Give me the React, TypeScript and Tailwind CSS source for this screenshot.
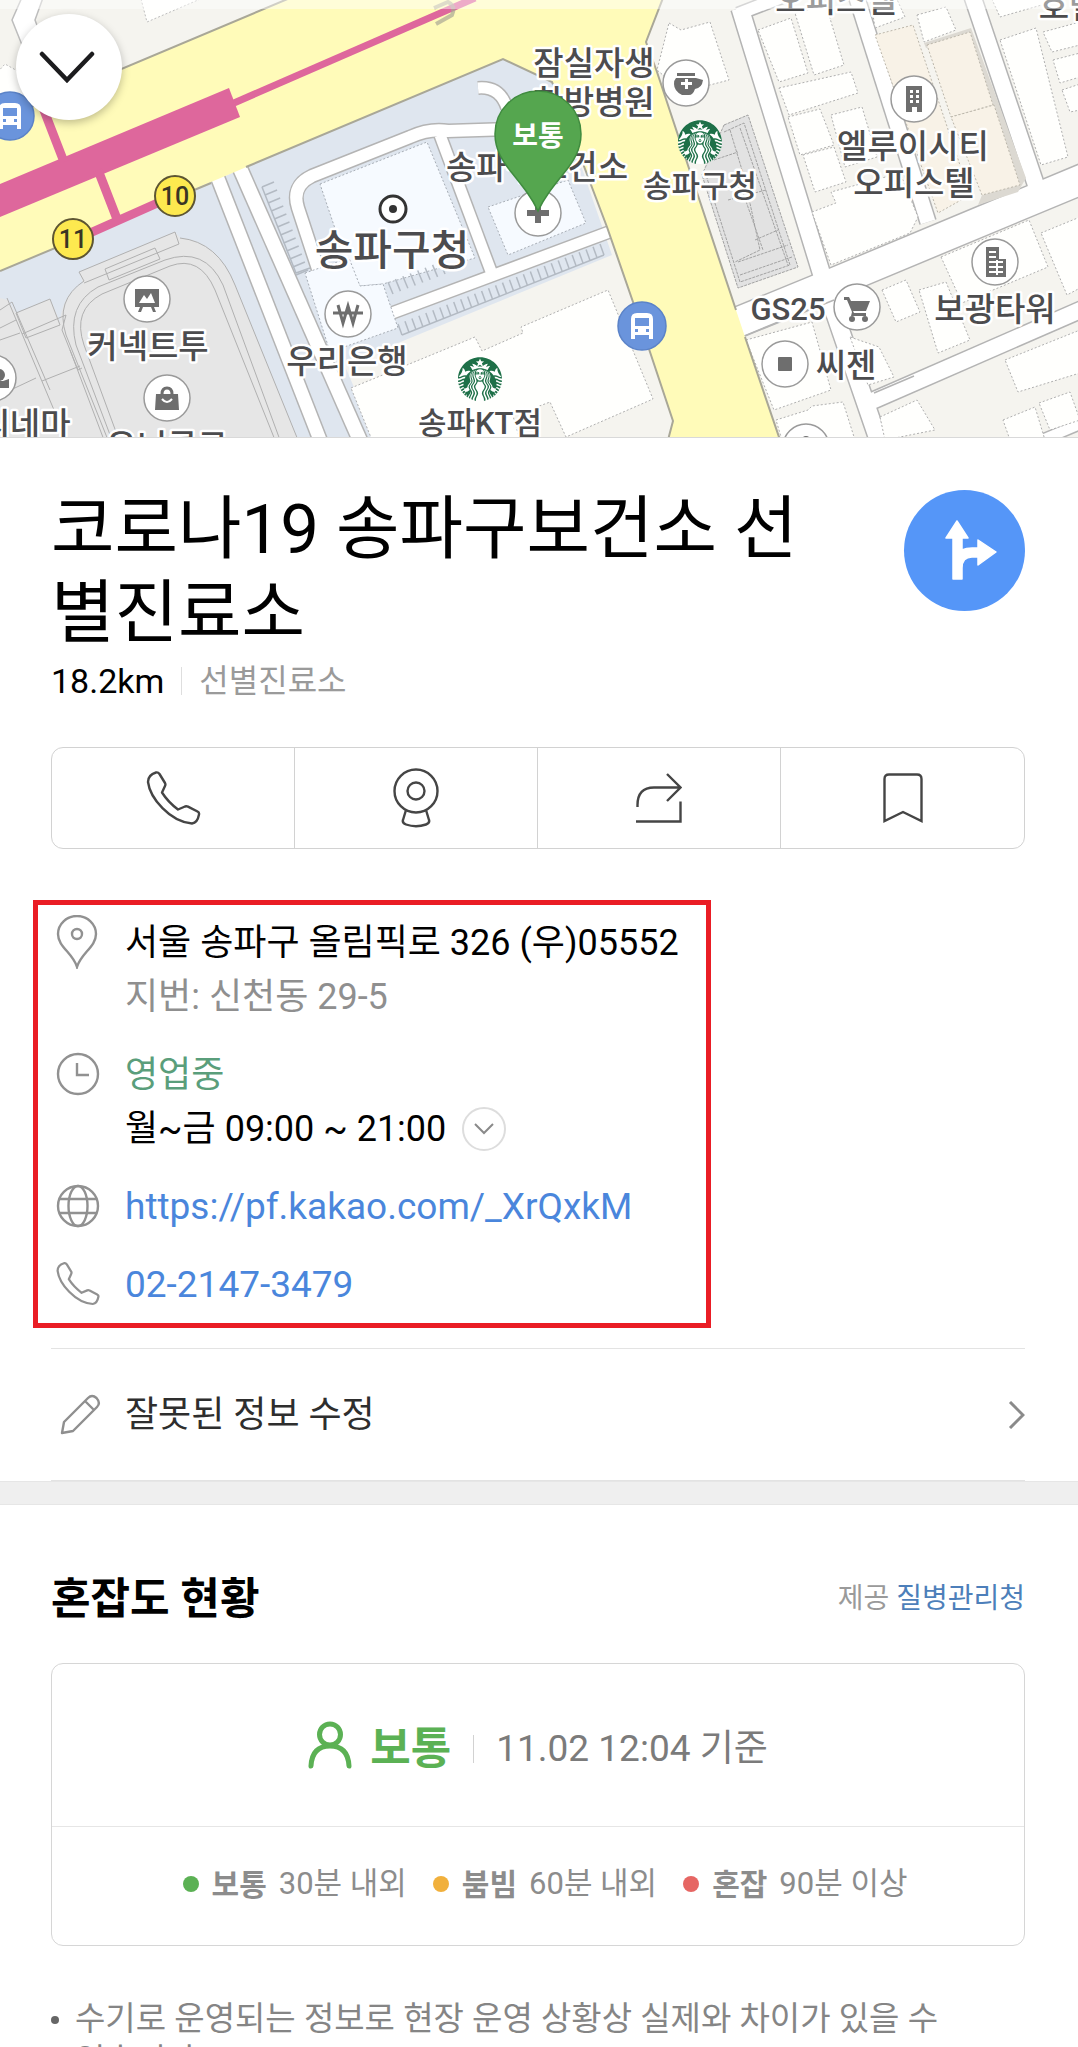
import { FC, ReactNode } from 'react';
import { SiStarbucks } from 'react-icons/si';

const FONT = "font-[Roboto,'Noto_Sans_CJK_KR',sans-serif]";

type Point = { x: number, y: number };

const whiteBuildings = [
  '758,30 791,18 808,73 779,82',
  '795,13 826,5 844,65 814,75',
  '779,88 851,72 858,93 789,115',
  '788,117 820,109 834,145 800,155',
  '831,115 862,107 877,157 845,167',
  '803,155 834,147 846,182 815,192',
  '812,212 836,203 831,192 900,173 918,217 910,233 831,265',
  '669,23 681,30 710,22 729,80 683,92 657,70',
  '917,15 946,7 956,30 924,42',
  '875,28 905,17 895,-5 870,-5',
  '1000,40 1036,28 1068,157 1041,165',
  '990,-5 1000,17 1045,4 1042,-5',
  '1043,32 1080,22 1080,45 1052,52',
  '1053,60 1080,53 1080,77 1060,83',
  '1062,90 1080,84 1080,110 1070,112',
  '941,257 1029,220 1048,267 962,303',
  '1041,233 1080,217 1080,288 1067,295',
  '882,290 906,280 920,312 896,322',
  '919,290 946,282 970,340 938,353',
  '1005,360 1080,330 1080,373 1018,392',
  '880,417 917,400 935,430 885,440',
  '1003,420 1035,407 1045,440 1010,440',
  '1039,403 1070,392 1080,420 1050,430',
  '746,340 812,322 831,390 774,410',
  '776,420 808,410 812,406 843,402 855,440 782,440',
  '850,337 879,347 894,377 868,385',
  '351,388 475,337 482,351 523,333 521,327 608,290 653,399 566,437 550,402 513,416 520,440 372,440',
];

const tanBuildings = [
  '875,35 913,25 970,195 938,213',
  '927,45 970,32 993,105 951,117',
  '951,117 994,105 1020,185 982,195',
];

const blueBuildings = [
  '320,184 427,142 475,258 383,284 360,286 349,270',
  '305,273 349,258 360,286 383,284 398,328 330,352',
  '488,207 568,180 586,223 508,255',
];

const roads = [
  { d: 'M740 8 L825 285 L880 445', w: 17 },
  { d: 'M738 14 L800 -10', w: 12 },
  { d: 'M856 -5 L928 222', w: 15 },
  { d: 'M972 -5 L1036 185', w: 16 },
  { d: 'M738 322 L826 286 L1085 178', w: 29 },
  { d: 'M872 401 L1085 308', w: 16 },
  { d: 'M1030 445 L1085 422', w: 10 },
];

const blueRoads = [
  { d: 'M217 176 L322 445', w: 13 },
  { d: 'M239 166 L362 445', w: 14 },
  { d: 'M319 272 L298 208 Q291 186 312 176 L410 137 Q430 128 448 131 L510 129', w: 12 },
  { d: 'M440 135 L492 274', w: 11 },
  { d: 'M392 313 L612 231', w: 11 },
  { d: 'M478 88 Q500 86 507 108', w: 11 },
];

const Roads: FC<{ items: { d: string, w: number }[] }> = ({ items }) => (
  <g fill="none">
    {items.map((r) => <path key={r.d} d={r.d} stroke="#b4b4b4" strokeWidth={r.w + 3} />)}
    {items.map((r) => <path key={r.d} d={r.d} stroke="#ffffff" strokeWidth={r.w} />)}
  </g>
);

const Stalls: FC<{ from: Point, to: Point, count: number, dx: number, dy: number }> = ({ from, to, count, dx, dy }) => (
  <g stroke="#b3bac3" strokeWidth="1.5">
    {Array.from({ length: count }, (_, i) => {
      const x = from.x + ((to.x - from.x) * i) / (count - 1);
      const y = from.y + ((to.y - from.y) * i) / (count - 1);
      return <line key={i} x1={x} y1={y} x2={x + dx} y2={y + dy} />;
    })}
  </g>
);

const Label: FC<Point & { size?: number, children: string }> = ({ x, y, size = 33, children }) => (
  <text x={x} y={y} fontSize={size} textAnchor="middle" fontWeight="500" fill="#4c4c4e" stroke="#ffffff" strokeWidth="5" strokeLinejoin="round" paintOrder="stroke">
    {children}
  </text>
);

const Poi: FC<Point & { children?: ReactNode }> = ({ x, y, children }) => (
  <g transform={`translate(${x} ${y})`}>
    <circle r="23" fill="#ffffff" stroke="#9a9a9a" strokeWidth="1.5" />
    <g fill="#6e6e6e">{children}</g>
  </g>
);

const BusStop: FC<Point> = ({ x, y }) => (
  <g transform={`translate(${x} ${y})`}>
    <circle r="24" fill="#6a94dc" stroke="#5b83c8" strokeWidth="1.5" />
    <path d="M-11 -7 Q-11 -13 -5 -13 H5 Q11 -13 11 -7 V13 H7 V9 H-7 V13 H-11 Z" fill="#ffffff" />
    <path d="M-7 -8 H7 V0 H-7 Z M-7 3 h3 v3 h-3 Z M4 3 h3 v3 h-3 Z" fill="#6a94dc" />
  </g>
);

const Starbucks: FC<Point> = ({ x, y }) => (
  <g>
    <circle cx={x} cy={y} r="22" fill="#ffffff" />
    <SiStarbucks x={x - 22} y={y - 22} size={44} color="#1e7048" />
  </g>
);

const Exit: FC<Point & { children: string }> = ({ x, y, children }) => (
  <g>
    <circle cx={x} cy={y} r="20" fill="#fde94f" stroke="#5d5532" strokeWidth="2" />
    <text x={x} y={y + 9} fontSize="25" fontWeight="500" textAnchor="middle" fill="#3a3524">{children}</text>
  </g>
);

const MapView = () => (
  <svg viewBox="0 0 1078 437" preserveAspectRatio="xMidYMid slice" className="block w-full h-[437px]" role="img" aria-label="지도">
    <rect width="1078" height="437" fill="#f5f4ef" />

    {/* ground */}
    <path d="M0 271 L503 59 L552 82 L612 255 L398 343 L345 366 L375 437 L0 437 Z" fill="#dfe6ef" />
    <path d="M23 -5 L12 20 L24 50 L50 60 L35 20 L44 -5 Z" fill="#ffffff" stroke="#bdbdbd" strokeWidth="1.5" />
    <path d="M-5 75 L5 64 L30 78 L30 110 L-5 120 Z" fill="#fffffd" stroke="#bdbdbd" strokeDasharray="2 2" />
    <path d="M140 -5 L147 22 L205 -3 Z" fill="#fffffd" stroke="#bdbdbd" strokeDasharray="2 2" />

    {/* mall */}
    <path d="M0 298 L8 300 L16 313 L50 299 L60 322 Q62 295 83 283 L79 272 L175 232 L180 238 Q218 242 235 285 L298 440 L0 440 Z" fill="#e6e6e6" />
    <g fill="none" stroke="#b0b0b0" strokeWidth="1">
      <path d="M108 440 L66 335 Q55 300 84 281 L79 272 L175 232 L179 244 L84 283" />
      <path d="M112 440 L76 345 Q66 305 98 287 L165 260 Q205 246 223 285 L280 440" />
      <path d="M119 440 L84 345 Q72 310 102 294 L170 266 Q200 255 215 290 L275 440" />
      <path d="M180 238 Q218 242 235 285 L298 440" />
      <path d="M105 269 L155 248 L160 259 L109 280 Z" />
      <path d="M7 298 L54 410 M12 302 L50 390 M16 313 L50 299 L60 325 L26 338 Z M0 310 L12 302 M0 328 L16 320 M0 340 L20 333 M22 334 L66 315 L62 330 L78 370 L82 368 M42 381 L80 366 M0 395 L36 378 M70 350 L104 440" />
    </g>

    <Roads items={blueRoads} />
    {blueBuildings.map((p) => <polygon key={p} points={p} fill="#f6faff" stroke="#a8aeb6" strokeDasharray="2 2" />)}
    <Stalls from={{ x: 262, y: 187 }} to={{ x: 296, y: 275 }} count={12} dx={12} dy={-5} />
    <path d="M262 187 L296 273 L310 268" fill="none" stroke="#b3bac3" strokeWidth="1.5" />
    <Stalls from={{ x: 398, y: 324 }} to={{ x: 600, y: 244 }} count={30} dx={4} dy={11} />
    <path d="M402 335 L604 255" fill="none" stroke="#b3bac3" strokeWidth="1.5" />
    <Stalls from={{ x: 388, y: 282 }} to={{ x: 440, y: 262 }} count={8} dx={5} dy={12} />

    {/* city blocks */}
    <Roads items={roads} />
    <path d="M874 393 L914 376 M745 336 L834 300" stroke="#b4b4b4" strokeWidth="1.5" />
    {whiteBuildings.map((p) => <polygon key={p} points={p} fill="#fffffd" stroke="#b0b0b0" strokeDasharray="2 2" />)}
    <path d="M924 43 L971 28 L1026 178 L1018 192 L978 205 L982 195 L1017 184 L968 35 L926 48 Z" fill="#dcd9d2" />
    {tanBuildings.map((p) => <polygon key={p} points={p} fill="#f8f2e7" stroke="#bcb7ab" strokeDasharray="2 2" />)}
    <g stroke="#a2a2a2" fill="none" strokeDasharray="3 1">
      <polygon points="724,125 748,115 798,267 738,288 702,175" fill="#e2e2e2" />
      <path d="M724 132 L744 123 L790 265 L740 282 L706 175 M730 130 L745 180 L760 250 L735 262 M740 128 L788 265 M714 160 L738 152 M728 200 L766 190 M733 190 L741 187 L763 250 M755 240 L778 230 M738 262 L788 245 M740 275 L792 257" />
    </g>

    {/* main roads */}
    <path d="M0 120 L290 -2 L663 -2 L646 42 L657 72 L736 310 L745 337 L780 440 L668 440 L673 421 L641 325 L607 227 L552 82 L503 59 L0 271 Z" fill="#fffbb9" />
    <path d="M0 120 L290 -2 M663 -2 L646 42 L657 72 L736 310 M745 337 L780 440 M668 440 L673 421 L641 325 L607 227 L552 82 L503 59 L246 167 M211 183 L0 271" fill="none" stroke="#a9a797" strokeWidth="2" />

    {/* subway */}
    <polygon points="0,184 229,88 240,117 0,217" fill="#de679c" />
    <g stroke="#de679c" fill="none">
      <path d="M234 103 L475 -2" strokeWidth="7" />
      <path d="M98 170 L117 219 M90 233 L162 201 M64 162 L40 100" strokeWidth="9" />
    </g>
    <path d="M434 8 l14 -6 q8 4 4 13 l-16 9" fill="none" stroke="#aaa694" strokeWidth="4" opacity="0.7" />
    <Exit x={175} y={196}>10</Exit>
    <Exit x={73} y={239}>11</Exit>

    <BusStop x={642} y={326} />
    <BusStop x={10} y={116} />

    <Poi x={686} y={83}>
      <path d="M-9 -10 H9 V-7 H-9 Z M-10 -5 H10 L17 -3 Q16 5 9 6 Q7 12 3 12 H-4 Q-12 8 -12 1 Q-12 -3 -10 -5 Z" />
      <path d="M-1 -4 h3 v3 h4 v3 h-4 v4 h-3 v-4 h-4 v-3 h4 Z" fill="#ffffff" />
    </Poi>
    <Poi x={914} y={99}>
      <path d="M-8 -13 H8 V13 H3 V8 H-2 V13 H-8 Z" />
      <path d="M-4 -9 h3 v3 h-3 Z M2 -9 h3 v3 h-3 Z M-4 -4 h3 v3 h-3 Z M2 -4 h3 v3 h-3 Z M-4 1 h3 v3 h-3 Z M2 1 h3 v3 h-3 Z" fill="#ffffff" />
    </Poi>
    <Poi x={995} y={262}>
      <path d="M-9 -15 H4 V-3 H11 V15 H-9 Z" />
      <path d="M-6 -10 H1 M-6 -5 H1 M-6 0 H8 M-6 5 H8 M-6 10 H8 M2 -2 V13" stroke="#ffffff" strokeWidth="2" />
    </Poi>
    <Poi x={857} y={307}>
      <path d="M-13 -10 H-8 L-6 -6 H13 L9 4 H-4 L-3 6 H9 V9 H-6 L-5 5 L-10 -7 H-13 Z" />
      <circle cx="-5" cy="12" r="3" />
      <circle cx="8" cy="12" r="3" />
    </Poi>
    <Poi x={785} y={364}>
      <rect x="-7" y="-7" width="14" height="14" rx="1" />
    </Poi>
    <Poi x={538} y={213}>
      <path d="M-3 -10 h6 v7 h8 v6 h-8 v7 h-6 v-7 h-8 v-6 h8 Z" />
    </Poi>
    <Poi x={147} y={299}>
      <path d="M-12 -10 H12 V8 H7 L9 13 H6 L4 8 H-4 L-6 13 H-9 L-7 8 H-12 Z" />
      <path d="M-8 4 L-3 -4 L0 0 L4 -6 L8 4 Z" fill="#ffffff" />
    </Poi>
    <Poi x={167} y={398}>
      <path d="M-11 -4 H11 L12 12 H-12 Z" />
      <path d="M-5 -4 Q-5 -10 0 -10 Q5 -10 5 -4" fill="none" stroke="#6e6e6e" strokeWidth="3" />
      <path d="M-5 1 Q0 7 5 1" fill="none" stroke="#ffffff" strokeWidth="2" />
    </Poi>
    <Poi x={348} y={314}>
      <path d="M-10 -9 L-5 9 L0 -8 L5 9 L10 -9 M-15 -1 H15" fill="none" stroke="#6e6e6e" strokeWidth="3" />
    </Poi>
    <Poi x={-7} y={378}>
      <circle cx="6" cy="-3" r="6" />
      <path d="M2 3 H10 L16 1 V10 H2 Z" />
    </Poi>
    <Poi x={806} y={447}>
      <circle cy="-6" r="5" />
    </Poi>

    <circle cx="393" cy="209" r="13" fill="#ffffff" stroke="#333333" strokeWidth="3" />
    <circle cx="393" cy="209" r="4" fill="#333333" />

    <Starbucks x={700} y={142} />
    <Starbucks x={480} y={379} />

    <Label x={594} y={75}>잠실자생</Label>
    <Label x={594} y={114}>한방병원</Label>
    <Label x={537} y={179}>송파구보건소</Label>
    <Label x={700} y={197} size={31}>송파구청</Label>
    <Label x={392} y={265} size={42}>송파구청</Label>
    <Label x={148} y={358}>커넥트투</Label>
    <Label x={347} y={373}>우리은행</Label>
    <Label x={480} y={434} size={31}>송파KT점</Label>
    <Label x={913} y={158}>엘루이시티</Label>
    <Label x={914} y={195}>오피스텔</Label>
    <Label x={788} y={320} size={31}>GS25</Label>
    <Label x={846} y={377}>씨젠</Label>
    <Label x={995} y={321}>보광타워</Label>
    <Label x={836} y={12}>오피스텔</Label>
    <Label x={1069} y={18}>호텔</Label>
    <Label x={25} y={436}>씨네마</Label>
    <Label x={167} y={458}>유니클로</Label>

    <path d="M538 91 A43 43 0 0 1 581 134 C581 150 573 162 564 173 C552 188 544 198 538 211 C532 198 524 188 512 173 C503 162 495 150 495 134 A43 43 0 0 1 538 91 Z" fill="#55a64f" stroke="#3f8b3f" strokeWidth="1.5" />
    <text x="538" y="146" fontSize="28" fontWeight="700" textAnchor="middle" fill="#ffffff">보통</text>

    <rect width="1078" height="9" fill="#ffffff" opacity="0.45" />
  </svg>
);

const PhoneIcon: FC<{ className: string, strokeWidth: number }> = ({ className, strokeWidth }) => (
  <svg viewBox="0 0 55 55" className={className} fill="none" stroke="currentColor" strokeWidth={strokeWidth} strokeLinejoin="round">
    <path d="M2 11 C2 6 5 3 10 1.5 Q12 1 13.5 3 L19 12 Q19.8 13.5 19 15 L16 21.5 Q22 31 32 38.5 L39 35.5 Q40.5 35 42 35.6 L51.5 40.5 Q53.5 41.5 53 43.5 C52 49 50 52 46 52.5 C24 51 4 27 2 11 Z" />
  </svg>
);

const WebcamIcon = () => (
  <svg viewBox="0 0 46 60" className="w-[46px] h-[60px]" fill="none" stroke="currentColor" strokeWidth="2.4">
    <circle cx="23" cy="23" r="21.5" />
    <circle cx="23" cy="23" r="8.5" />
    <path d="M13 42 L10 52 Q9 55 13 56.5 Q23 60 33 56.5 Q37 55 36 52 L33 42" />
  </svg>
);

const ShareIcon = () => (
  <svg viewBox="0 0 46 50" className="w-[46px] h-[50px]" fill="none" stroke="currentColor" strokeWidth="2.4">
    <path d="M1.5 34 V32 Q1.5 14.5 18 14.5 H44 M31 1 L44.5 14.5 L31 28 M0 48.5 H44.5 V28.5" />
  </svg>
);

const BookmarkIcon = () => (
  <svg viewBox="0 0 40 50" className="w-[40px] h-[50px]" fill="none" stroke="currentColor" strokeWidth="2.4">
    <path d="M1.5 48 V6 Q1.5 1.5 6 1.5 H34 Q38.5 1.5 38.5 6 V48 L20 39 Z" />
  </svg>
);

const InfoRow: FC<{ icon: ReactNode, children: ReactNode }> = ({ icon, children }) => (
  <div className="flex items-start">
    <div className="w-[87px] h-[52px] flex items-center pl-[18px] text-[#919191]">{icon}</div>
    <div>{children}</div>
  </div>
);

const legend = [
  { name: '보통', text: '30분 내외', color: 'bg-[#5bb154]' },
  { name: '붐빔', text: '60분 내외', color: 'bg-[#f1b03c]' },
  { name: '혼잡', text: '90분 이상', color: 'bg-[#e66663]' },
];

export default function App() {
  return (
    <main lang="ko" className={`${FONT} h-screen overflow-hidden bg-white text-black`}>
      <div className="relative border-b border-[#d9d9d9]">
        <MapView />
        <button aria-label="접기" className="absolute left-4 top-[14px] size-[106px] rounded-full bg-white shadow-[0_3px_8px_rgba(0,0,0,0.25)] flex items-center justify-center pr-1">
          <svg viewBox="0 0 56 32" className="w-[56px] h-[32px]" fill="none" stroke="#1c1c1e" strokeWidth="4.5" strokeLinecap="round">
            <path d="M3 3 L28 29 L53 3" />
          </svg>
        </button>
      </div>

      <div className="pl-[51px] pr-[53px] pt-[50px]">
        <div className="flex items-start gap-16">
          <h1 className="flex-1 text-[69px] leading-[84px]">코로나19 송파구보건소 선별진료소</h1>
          <button aria-label="길찾기" className="mt-0.5 size-[121px] rounded-full bg-[#5596f8]">
            <svg viewBox="0 0 121 121" fill="#ffffff" stroke="#ffffff" strokeWidth="1.5" strokeLinejoin="round">
              <path d="M53 31 L42 48 H49 V89 H58 V78 Q58 67 68 67 H74 V75 L92 62 L74 50 V58 H68 Q62 58 58 60 V48 H64 Z" />
            </svg>
          </button>
        </div>
        <div className="flex items-center h-[50px]">
          <span className="text-[34px]">18.2km</span>
          <span className="w-px h-7 mx-[17px] bg-[#dedede]" />
          <span className="text-[32px] text-[#9a9a9a]">선별진료소</span>
        </div>

        <div className="mt-[41px] h-[102px] grid grid-cols-4 divide-x divide-[#d2d2d2] border border-[#d2d2d2] rounded-xl text-[#454545]">
          <button aria-label="전화" className="flex items-center justify-center"><PhoneIcon className="size-[55px]" strokeWidth={2.4} /></button>
          <button aria-label="로드뷰" className="flex items-center justify-center"><WebcamIcon /></button>
          <button aria-label="공유" className="flex items-center justify-center"><ShareIcon /></button>
          <button aria-label="저장" className="flex items-center justify-center"><BookmarkIcon /></button>
        </div>
      </div>

      <div className="ml-[33px] mt-[51px] w-fit border-[5px] border-[#ea1d25] pt-[11px] pb-[11px] pr-[27px] text-[36px] leading-[54px] flex flex-col gap-6">
        <InfoRow
          icon={
            <svg viewBox="0 0 42 54" className="w-[42px] h-[54px]" fill="none" stroke="currentColor" strokeWidth="2.4">
              <path d="M21 52 C17 38 2 32 2 19 A19 18 0 0 1 40 19 C40 32 25 38 21 52 Z" />
              <circle cx="21" cy="19" r="5" />
            </svg>
          }
        >
          <p>서울 송파구 올림픽로 326 (우)05552</p>
          <p className="text-[#8f8f8f]">지번: 신천동 29-5</p>
        </InfoRow>
        <InfoRow
          icon={
            <svg viewBox="0 0 44 44" className="size-[44px]" fill="none" stroke="currentColor" strokeWidth="2.4">
              <circle cx="22" cy="22" r="20" />
              <path d="M21 11 V23 H33" />
            </svg>
          }
        >
          <p className="text-[#5a9e7b]">영업중</p>
          <div className="flex items-center gap-4">
            <span>월~금 09:00 ~ 21:00</span>
            <button aria-label="영업시간 더보기" className="size-[44px] rounded-full border-2 border-[#dddddd] flex items-center justify-center">
              <svg viewBox="0 0 20 12" className="w-5 h-3" fill="none" stroke="#8a8a8a" strokeWidth="2">
                <path d="M1 1 L10 10 L19 1" />
              </svg>
            </button>
          </div>
        </InfoRow>
        <InfoRow
          icon={
            <svg viewBox="0 0 44 44" className="size-[44px]" fill="none" stroke="currentColor" strokeWidth="2.4">
              <circle cx="22" cy="22" r="20" />
              <ellipse cx="22" cy="22" rx="9.5" ry="20" />
              <path d="M4 15 H40 M4 29 H40" />
            </svg>
          }
        >
          <a href="https://pf.kakao.com/_XrQxkM" className="block text-[37px] leading-[54px] text-[#4a86dc]">https://pf.kakao.com/_XrQxkM</a>
        </InfoRow>
        <InfoRow icon={<PhoneIcon className="size-[44px]" strokeWidth={2.8} />}>
          <a href="tel:02-2147-3479" className="block text-[37px] leading-[54px] text-[#4a86dc]">02-2147-3479</a>
        </InfoRow>
      </div>

      <div className="pl-[51px] pr-[53px]">
        <button className="mt-5 w-full h-[133px] border-y border-[#e3e3e3] flex items-center text-left text-[36px] text-[#2e2e2e]">
          <svg viewBox="0 0 42 42" className="w-[42px] h-[42px] ml-2 mr-[24px]" fill="none" stroke="#8f8f8f" strokeWidth="2.4" strokeLinejoin="round">
            <path d="M3 39 L5 28 L29 4 Q33 0 37.5 4 Q42 9 38 13 L14 37 Z M26 7 L35 16" />
          </svg>
          <span className="flex-1">잘못된 정보 수정</span>
          <svg viewBox="0 0 17 28" className="w-[17px] h-[28px]" fill="none" stroke="#8a8a8a" strokeWidth="3">
            <path d="M2 1 L15 14 L2 27" />
          </svg>
        </button>
      </div>
      <div className="h-6 bg-[#efefef] border-y border-[#e6e6e6]" />

      <section className="pl-[51px] pr-[53px] pt-16">
        <div className="flex items-center justify-between h-[60px]">
          <h2 className="text-[43px] font-bold">혼잡도 현황</h2>
          <p className="text-[28px] text-[#9a9a9a]">제공 <a href="#" className="text-[#4d7fba]">질병관리청</a></p>
        </div>

        <div className="mt-[34px] border border-[#d6d6d6] rounded-xl">
          <div className="h-[163px] flex items-center justify-center border-b border-[#e6e6e6]">
            <svg viewBox="0 0 44 48" className="w-[44px] h-[48px] mr-[18px]" fill="none" stroke="#5bb154" strokeWidth="5" strokeLinecap="round">
              <circle cx="22" cy="13.5" r="10.5" />
              <path d="M3 45 Q4 25 22 25 Q40 25 41 45" />
            </svg>
            <div className="flex items-center pt-2">
              <strong className="text-[44px] font-bold text-[#5bb154]">보통</strong>
              <span className="w-px h-7 mx-[22px] bg-[#d2d2d2]" />
              <span className="text-[37px] text-[#7b7b7b]">11.02 12:04 기준</span>
            </div>
          </div>
          <ul className="h-[118px] flex items-center justify-center gap-[26px] pl-[14px] pb-1 text-[#8c8c8c]">
            {legend.map((l) => (
              <li key={l.name} className="flex items-center">
                <span className={`${l.color} size-4 rounded-full mr-[13px]`} />
                <span className="text-[30px] font-bold mr-3">{l.name}</span>
                <span className="text-[31px]">{l.text}</span>
              </li>
            ))}
          </ul>
        </div>

        <ul className="mt-[52px] text-[33px] leading-[42px] text-[#858585]">
          <li className="flex break-keep">
            <span className="shrink-0 size-2 mt-[18px] mr-[16px] rounded-full bg-[#666666]" />
            수기로 운영되는 정보로 현장 운영 상황상 실제와 차이가 있을 수 있습니다.
          </li>
        </ul>
      </section>
    </main>
  );
}
